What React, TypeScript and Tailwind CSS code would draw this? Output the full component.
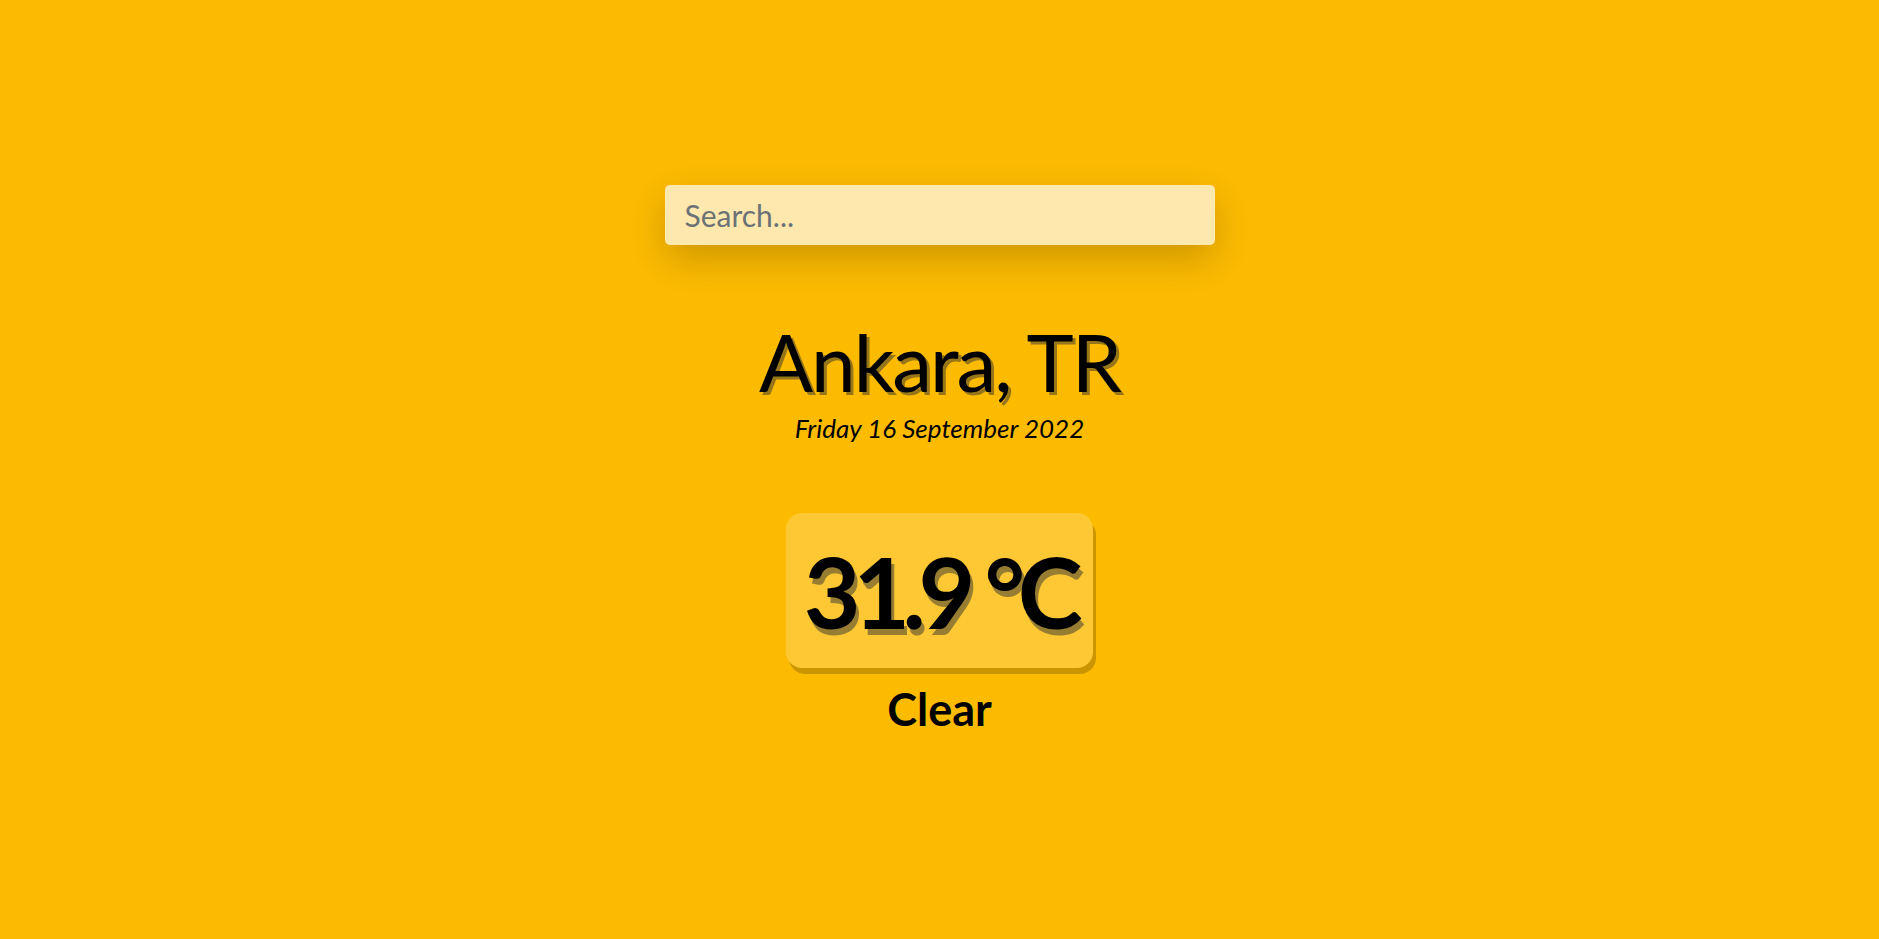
const App = () => {
  return (
    <main className="min-h-screen w-full bg-[#fdbb00] flex flex-col items-center pt-[185px] font-['Lato','Noto_Sans',sans-serif] text-black">
      <input
        type="text"
        placeholder="Search..."
        className="w-[550px] h-[60px] rounded-[5px] bg-[#fee8ae] px-[20px] text-[30px] text-[#333] placeholder:text-[#6b7276] outline-none border-none shadow-[0_14px_40px_rgba(0,0,0,0.2)]"
      />

      <div className="flex flex-col items-center mt-[76px]">
        <h1 className="text-[80px] leading-none font-normal tracking-[-0.025em] [text-shadow:3px_3px_rgba(50,50,50,0.5)]">
          Ankara, TR
        </h1>
        <p className="mt-[14px] text-[26px] leading-none italic">Friday 16 September 2022</p>
      </div>

      <div className="mt-[72px] flex flex-col items-center">
        <div className="w-[307px] h-[155px] flex items-center justify-center rounded-[16px] bg-[#fdc833] shadow-[3px_6px_rgba(0,0,0,0.2)]">
          <span className="text-[98px] leading-none font-bold tracking-[-0.075em] [text-shadow:3px_6px_rgba(50,50,50,0.5)]">
            31.9 °C
          </span>
        </div>
        <p className="mt-[19px] text-[45px] leading-none font-bold">Clear</p>
      </div>
    </main>
  );
};

export default App;
